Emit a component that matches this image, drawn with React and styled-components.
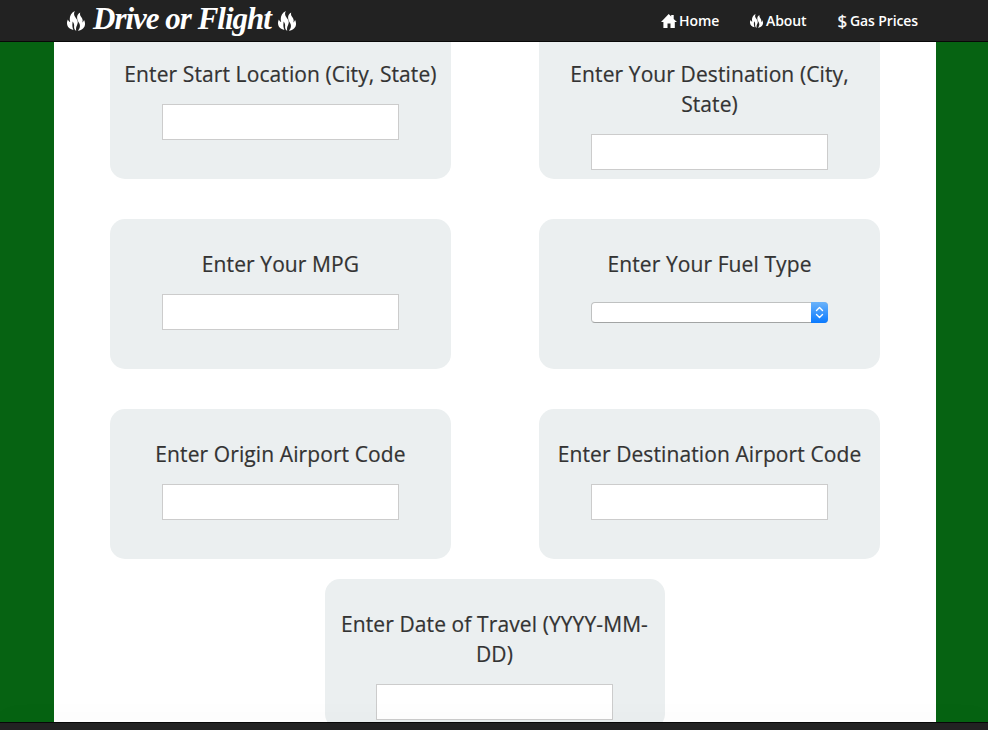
import React from 'react';
import styled, { createGlobalStyle } from 'styled-components';

const Global = createGlobalStyle`
  * { box-sizing: border-box; }
  body { margin: 0; overflow: hidden; font-family: "Open Sans", "Noto Sans", sans-serif; color: #333; }
`;
const Page = styled.div`
  display: flex; flex-direction: column; height: 100vh; background: #066312;
`;
const Header = styled.header`
  display: flex; align-items: center; justify-content: space-between;
  height: 42px; flex: none; padding: 0 70px 0 67px;
  background: #222; border-bottom: 1px solid #080808; color: #fff;
`;
const Brand = styled.a`
  display: flex; align-items: center; height: 41px;
`;
const BrandName = styled.span`
  width: 179px; margin: -3px 6px 0 8px; white-space: nowrap;
  font: italic bold 31px/38px "Liberation Serif", serif; letter-spacing: -1px;
`;
const Nav = styled.nav`
  display: flex; gap: 31px;
`;
const NavLink = styled.a`
  display: flex; align-items: center; gap: ${p => p.$gap}px;
  font-size: 14px; line-height: 20px; font-weight: 600; letter-spacing: -0.12px; white-space: nowrap;
`;
const Dollar = styled.span`
  font-size: 17px; font-weight: 400; -webkit-text-stroke: 0.3px #fff;
`;
const Main = styled.main`
  flex: 1; min-height: 0; overflow: hidden; width: 882px; margin: 0 52px 0 54px; background: #fff;
`;
const Form = styled.form`
  display: grid; grid-template-columns: 341px 341px; column-gap: 88px; row-gap: 40px;
  padding-left: 56px; margin-top: -13px;
`;
const Card = styled.section`
  display: flex; flex-direction: column; align-items: center; gap: 15px;
  height: 150px; padding-top: 30px; border-radius: 15px; background: #ebeff0;
`;
const DateCard = styled(Card)`
  grid-column: 1 / -1; width: 340px; margin: -20px 0 0 215px; padding-right: 1px;
`;
const Label = styled.label`
  width: 320px; text-align: center; font-size: 21px; line-height: 30px; letter-spacing: 0.1px;
  -webkit-text-stroke: 0.2px #333;
`;
const Input = styled.input`
  width: 237px; height: 36px; border: 1px solid #ccc; background: #fff; border-radius: 0; padding: 4px 8px; outline: none;
`;
const Select = styled.button`
  display: flex; justify-content: flex-end; width: 237px; height: 21px; margin-top: 8px; padding: 0;
  border: 1px solid #bfc1c1; border-bottom-color: #a2a4a4; border-radius: 4px; background: #fff;
`;
const Stepper = styled.span`
  width: 17px; height: 21px; margin: -1px -1px 0 0; border-radius: 0 4px 4px 0;
  background: linear-gradient(#6bb3fa, #0a7aff);
`;
const Footer = styled.footer`
  position: relative; flex: none; height: 8px; background: #222; border-top: 1px solid #080808;
  box-shadow: 0 -4px 24px rgba(0,0,0,.04);
`;
const Icon = styled.svg`
  display: block; flex: none; fill: currentColor;
`;
function Fire({ w, h }) {
  return (
    <Icon width={w} height={h} viewBox="0 0 18 20" preserveAspectRatio="none">
      <path d="M7.800 0C6.300 3.200 7.300 5 9 7.200c1.800 2.300 2.400 4.200 1 7-.9 1.900-1.300 3.600-.7 5.600C7.500 19 6.900 17.300 7.100 15.300c.2-2-.2-3.300-1.500-4.900-.1 2.600-.8 4.600.8 8.600C2.700 18.200.3 16.300 0 12.600c-.1-1.300.2-2.800.9-4.200.5 1.300 1.200 2.100 2.300 2.700C2 7 3.100 2.300 7.800 0z" />
      <path d="M13.200 1.600c-.5 2 .1 3.200 1.400 4.800 1.200 1.500 1.300 3.300.7 5 1-.5 1.400-1.300 1.700-2.600 2.400 4.900.7 9.800-6.100 11 1.800-2.200 2.500-4.300 1.700-6.700-.6-1.700-1.700-2.600-2.200-4.400-.7-2.800-.3-5.300 2.800-7.100z" />
    </Icon>
  );
}
function Home() {
  return (
    <Icon width="16" height="14" viewBox="0 0 16 14">
      <path d="M7.700 0l2.500 2.500V1h2.500v4L16 8h-2.200v6H9.500V9.500h-3V14H2.400V8H0z" />
    </Icon>
  );
}
const fields = [
  { label: 'Enter Start Location (City, State)' },
  { label: 'Enter Your Destination (City, State)' },
  { label: 'Enter Your MPG' },
  { label: 'Enter Your Fuel Type', select: true },
  { label: 'Enter Origin Airport Code' },
  { label: 'Enter Destination Airport Code' },
];
export default function App() {
  return (
    <Page>
      <Global />
      <Header>
        <Brand><Fire w={18} h={20} /><BrandName>Drive or Flight</BrandName><Fire w={18} h={20} /></Brand>
        <Nav>
          <NavLink $gap={2}><Home />Home</NavLink>
          <NavLink $gap={3}><Fire w={13} h={14} />About</NavLink>
          <NavLink $gap={3}><Dollar>$</Dollar>Gas Prices</NavLink>
        </Nav>
      </Header>
      <Main>
        <Form>
          {fields.map(f => (
            <Card key={f.label}>
              <Label>{f.label}</Label>
              {f.select ? (
                <Select type="button" aria-label={f.label}>
                  <Stepper>
                    <Icon width="17" height="21" viewBox="0 0 17 21">
                      <path d="M5.500 8.500l3-3 3 3M5.500 12.500l3 3 3-3" fill="none" stroke="#fff" strokeWidth="1.400" strokeLinecap="round" strokeLinejoin="round" />
                    </Icon>
                  </Stepper>
                </Select>
              ) : <Input aria-label={f.label} />}
            </Card>
          ))}
          <DateCard>
            <Label>Enter Date of Travel (YYYY-MM-DD)</Label>
            <Input aria-label="Date of travel" />
          </DateCard>
        </Form>
      </Main>
      <Footer />
    </Page>
  );
}
